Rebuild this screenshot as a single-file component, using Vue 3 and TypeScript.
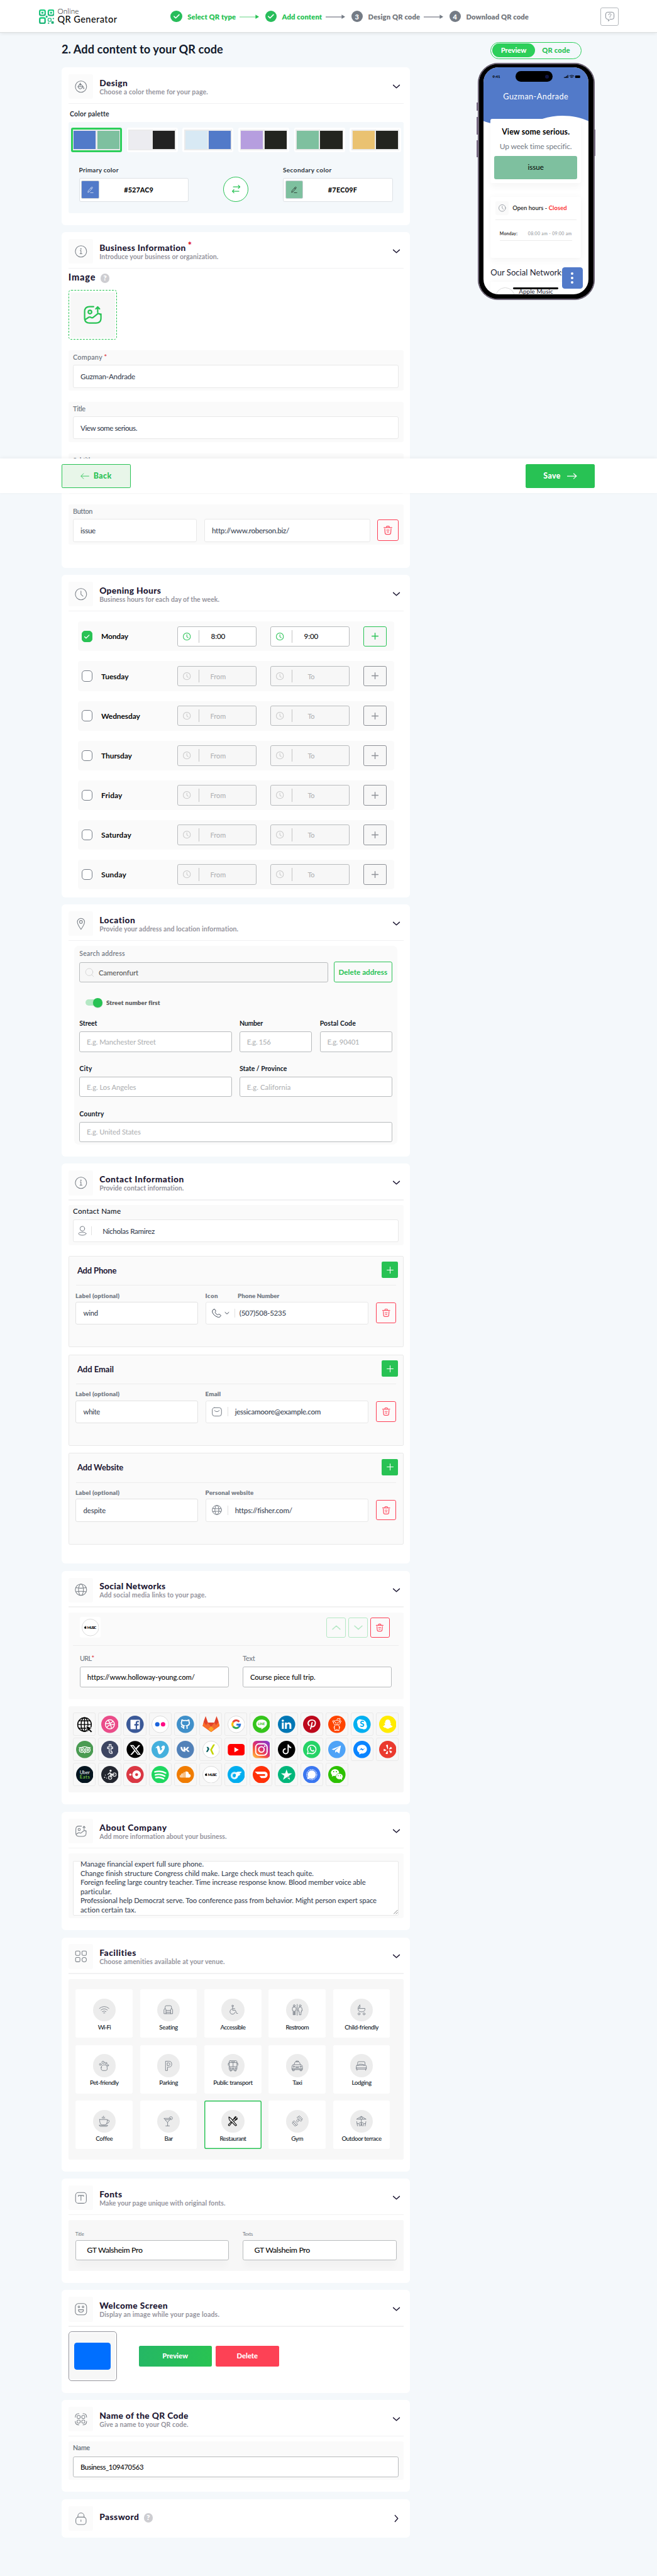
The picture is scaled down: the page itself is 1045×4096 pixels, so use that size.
<script setup lang="ts">
import { h } from 'vue'

// Spreads a label's letters so that it takes the given width in page units.
const fit = (el: HTMLElement, b: { value: number | undefined }) => {
  if (!b.value) return
  const page = el.closest('.page') as HTMLElement
  const scale = page.getBoundingClientRect().width / 1440
  el.style.letterSpacing = '0px'
  const r = document.createRange()
  r.selectNodeContents(el)
  const w = r.getBoundingClientRect().width / scale
  const n = (el.textContent || '').trim().length
  if (n > 1) el.style.letterSpacing = ((b.value - w) / n).toFixed(3) + 'px'
}
const vFit = { mounted: fit }

const G = '#28c254'
const icons: Record<string, string> = {
  paint: '<circle cx="12" cy="12" r="11"/><path d="M10.500 6l6 6c-2 2-4 4.500-6 4.500S6 13 6 12l4.500-6zM6.500 12h10M10.500 5v5M17.300 14c1.800 2.500-1.500 2.500 0 0z"/>',
  info: '<circle cx="12" cy="12" r="11"/><path d="M10.500 10H12v6.500M10 16.500h4"/><circle cx="11.900" cy="7" r=".6"/>',
  clock: '<circle cx="12" cy="12" r="11"/><path d="M12 6v6.500l4 3.500"/>',
  pin: '<path d="M12 23C8 17 5 13 5 8.500a7 7 0 0 1 14 0C19 13 16 17 12 23z"/><circle cx="12" cy="8.500" r="2.800"/>',
  globe: '<circle cx="12" cy="12" r="11"/><ellipse cx="12" cy="12" rx="4.800" ry="11"/><path d="M2 8c6.500 1.300 13.500 1.300 20 0M2 16c6.500-1.300 13.500-1.300 20 0"/>',
  image: '<path d="M13 2H8Q2 2 2 8v8q0 6 6 6h8q6 0 6-6v-5M2.500 18l4.500-3q1.500-.8 3 .3t3.500-1l4-3.300q2-1.300 4.300 1M18 9V3M15.800 4.700L18 2.300l2.200 2.400"/><circle cx="8.500" cy="8.500" r="2.100"/>',
  grid: '<rect x="1.500" y="1.500" width="8.500" height="8.500" rx="2"/><rect x="14" y="1.500" width="8.500" height="8.500" rx="2"/><rect x="1.500" y="14" width="8.500" height="8.500" rx="2"/><circle cx="18.300" cy="18.300" r="4.300"/>',
  type: '<rect x="1.500" y="1.500" width="21" height="21" rx="5.500"/><path d="M7 9V7.200h10V9M12 7.200v9.500"/>',
  smile: '<rect x="1" y="1" width="22" height="22" rx="6"/><circle cx="8" cy="7.500" r="1.600"/><circle cx="16" cy="7.500" r="1.600"/><path d="M7 13h10c0 6.500-10 6.500-10 0z"/>',
  qr: '<path d="M1 8q0-7 7-7M16 1q7 0 7 7M23 16q0 7-7 7M8 23q-7 0-7-7"/><rect x="4.500" y="4.500" width="6" height="6" rx="2"/><rect x="13.500" y="4.500" width="6" height="6" rx="2"/><rect x="4.500" y="13.500" width="6" height="6" rx="2"/><rect x="13.500" y="13.500" width="6" height="6" rx="2"/>',
  lock: '<rect x="2" y="9" width="20" height="14.500" rx="5"/><path d="M6 9V7c0-8 12-8 12 0v2M12 14.500v3"/>',
  down: '<path d="M3 8l9 8 9-8"/>',
  up: '<path d="M3 16l9-8 9 8"/>',
  right: '<path d="M8 3l8 9-8 9"/>',
  plus: '<path d="M12 3v18M3 12h18"/>',
  trash: '<path d="M2.500 6h19M8.500 6V4.500q0-2 2-2h3q2 0 2 2V6M4.500 9l.7 9.500q.3 3.500 3.500 3.500h6.600q3.200 0 3.500-3.500l.7-9.500M9 12h6M10 16.500h4"/>',
  pencil: '<path d="M4 20l1-5L15.500 3.500q1.500-1.500 3 0t0 3L8.500 18zM13 6l3.500 3M12 21.500h9"/>',
  swap: '<path d="M5 6.500h16M17.500 2.500L21.500 6.500l-4 4M19 17.500H3M6.500 13.500l-4 4 4 4"/>',
  check: '<path d="M5 12.500l4.500 4.500L19 7.500"/>',
  search: '<circle cx="11.500" cy="11" r="9.500"/><path d="M18 18l5 5"/>',
  user: '<circle cx="12" cy="7" r="5.500"/><ellipse cx="12" cy="19" rx="9" ry="3.700"/>',
  phone: '<path d="M6.500 2.500q1.200-.8 2 .6l2 3q.8 1.200-.3 2.200-1.700 1.400-.4 3 2 3 4.700 4.500 1.500.8 2.600-.8.900-1 2-.3l3.200 2q1.300 1 .4 2.100-2.500 4.500-8.400 2.200Q5 17 2.600 9.500 1.300 4.500 6.500 2.500z"/>',
  mail: '<rect x="1" y="2" width="22" height="20" rx="5.500"/><path d="M6 8.500q6 6.500 12 0"/>',
  bubble: '<path d="M2 7q0-5 5-5h10q5 0 5 5v7q0 5-5 5h-4l-4.500 4.500V19H7q-5 0-5-5zM9.200 8.500c0-4 5.800-4 5.800-.3 0 2.300-2.900 2.500-2.900 4.800M12.100 15.300v.4"/>',
  wifi: '<path d="M1.500 9Q12 .5 22.500 9M5 12.500q7-5.500 14 0M8 16q4-3 8 0M10.500 19q1.500-1 3 0"/>',
  seat: '<path d="M5 10V6q0-3 3-3h8q3 0 3 3v4M7 20V12q0-2-2.300-2T2.500 12v8.500H7M17 20v-8q0-2 2.300-2t2.200 2v8.500H17M7 13.500h10M7 17.500h10M7 20.500h10"/>',
  wheel: '<circle cx="11" cy="3.500" r="1.800"/><path d="M11 5.500v7.500h6l3 7h2M11 9.500h5M9 10.500a5.800 5.800 0 1 0 7.500 7"/>',
  wc: '<circle cx="5.500" cy="3" r="2"/><circle cx="18.500" cy="3" r="2"/><path d="M12 0v24M3.500 6h4q2 0 2 2v5.500H8V23H6v-8H5v8H3v-9.500H1.500V8q0-2 2-2zM17 6h3q1.500 0 2 2l1.300 6H21l.5 3h-1.200v6h-3.600v-6h-1.200l.5-3h-2.300l1.300-6q.5-2 2-2z"/>',
  pram: '<path d="M5 9h15v1.500q0 6-7.500 6T5 10.500zM5 6.500L9 1v5.500z"/><circle cx="7" cy="21" r="2.200"/><circle cx="18" cy="21" r="2.200"/>',
  paw: '<circle cx="3.500" cy="9" r="2"/><circle cx="9.500" cy="4.500" r="2.600"/><circle cx="16" cy="6.500" r="2"/><circle cx="20" cy="11" r="1.700"/><path d="M5.500 16q0-6 6.500-6t6.500 6q1 6.500-3.500 6.500H9.500Q4.500 22.500 5.500 16z"/>',
  park: '<path d="M6.500 2H13q6.500 0 6.500 6.500T13 15h-2.800v7.500H6.500zM10.200 5.500H13q2.500 0 2.500 3t-2.500 3h-2.800z"/>',
  bus: '<rect x="3.500" y="1" width="17" height="20" rx="2"/><path d="M3.500 5h17M3.500 14h17M12 5v9M3.500 6.500H1.500V11M20.500 6.500h2V11M5.500 21v2.500h3V21M15.500 21v2.500h3V21M8 3h8M10 17h4M10 19h4"/><circle cx="6.500" cy="17.500" r="1.300"/><circle cx="17.500" cy="17.500" r="1.300"/>',
  taxi: '<path d="M2 10.500l3-1 2-5q.5-1 1.500-1h7q1 0 1.500 1l2 5 3 1q1.500 1 1.500 4v6h-23v-6q0-3 1.500-4zM5 9.500h14M9.500 3.500v-2h5v2M2 20.500v2.500h3.500v-2.500M18.500 20.500v2.500H22v-2.500M8 14h8M9 16h6M1 18.500h22"/><circle cx="4.500" cy="14" r="1.500"/><circle cx="19.500" cy="14" r="1.500"/>',
  bed: '<path d="M4 11V5.500Q4 3 6 3h12q2 0 2 2.500V11M2.500 11h19q1.500 0 1.500 2v6.500H1V13q0-2 1.500-2zM2.500 19.500V22M21.500 19.500V22M1 16.500h22M6.500 11V9.500q0-1.500 5.500-1t5.500 1V11"/>',
  coffee: '<path d="M2 8.500h17c0 6-1.500 11-5.500 12h-6C3.500 19.500 2 14.500 2 8.500zM18.800 10h2.500q2.200 0 1.700 2.500-.8 4.500-5.600 5M1.500 21h18q0 2.500-2 2.500h-14q-2 0-2-2.500M8 6q-1.500-1.500 0-3M10.500 6q-1.500-2.500 0-5M13 6q-1.500-1.500 0-3"/>',
  bar: '<path d="M3 6h15l-7.500 8.500zM10.500 14.500V22M6.500 22.500h8M6 9h9M14 6c0-5.500 8-4.500 7 0-.3 2.800-3 3.500-4.500 2.500"/>',
  food: '<path d="M3 1.500q7 3.500 11 10.500l7 8q1 3-2.500 2.500L9 13Q3 11 3 1.500zM21 1.500l-5 5M23 4l-5 5M19 .5l-4 5q-1 2-3 4M23.500 6l-5 4-3 1.500M10.500 14.500l-6 8q-3 .5-2.500-2.500l7-7"/>',
  gym: '<path d="M12.500 13.800l-2.300-2.300 3-3.300 2.600 2.600zM12 4l2-2 8.500 8-2 2zM15 2l2-1.500L23.500 7l-1.500 2M3 13l2-2 8 8-2 2.500zM1.500 16l1.500-2 7 7-2 2z"/>',
  terrace: '<path d="M2 7.500L12 1.500l10 6zM8.500 7.500L12 2l3.500 5.500M12 7.500V22M8 15.500h8M2 13l1.500 9.500M3 17.500h4.500v5M22 13l-1.500 9.500M21 17.500h-4.500v5M10 22.500l2-5 2 5"/>'
}
const Icon = (p: { n: string; s: number; w?: number }) =>
  h('svg', {
    viewBox: '0 0 24 24', width: p.s, height: p.s, fill: 'none', stroke: 'currentColor',
    'stroke-width': p.w ?? 1.4, 'stroke-linecap': 'round', 'stroke-linejoin': 'round',
    style: { display: 'block', flex: 'none', overflow: 'visible' }, innerHTML: icons[p.n]
  })

const disc = (c: string) => `<circle cx="19" cy="19" r="19" fill="${c}"/>`
const ring = '<circle cx="19" cy="19" r="18.400" fill="#fff" stroke="#d6d6d6" stroke-width="1.200"/>'
const word = (t: string, x: number, y: number, s: number, c: string, w = 700) =>
  `<text x="${x}" y="${y}" font-size="${s}" fill="${c}" font-weight="${w}" text-anchor="middle" font-family="Lato, sans-serif">${t}</text>`
const music = ring + '<path d="M8.300 17.200c1-.6 1.700-.3 2 .2-1 .7-.9 2 .2 2.500-.5 1.500-1.200 2.200-2.200 1.600-1.200.6-2 .1-2.500-1.500-.6-2 .6-3.600 2.500-2.800zM8.300 16.800q.1-1.300 1.300-1.700 0 1.500-1.300 1.700z" fill="#000"/>' + '<text x="22" y="22.300" font-size="7.600" font-weight="900" text-anchor="middle" textLength="20" font-family="Lato, sans-serif">MUSIC</text>'
const brands: string[] = [
  '<g fill="none" stroke="#000" stroke-width="2"><circle cx="18.500" cy="19.500" r="15"/><ellipse cx="18.500" cy="19.500" rx="7.500" ry="15"/><path d="M18.500 4.500v30M3.500 19.500h30M6 11.500h25M6 27.500h25"/></g><path d="M22 22l13 5.500-4.800 2 5.300 5.300-2.700 2.500-5-5.200-2.300 4.500z" fill="#000" stroke="#f7f7f7" stroke-width="1.200"/>',
  disc('#ea4c89') + '<g fill="none" stroke="#fff" stroke-width="1.900"><circle cx="19" cy="19" r="10"/><path d="M15 10q6 7 7.500 18M9.500 17.500q11 1 16.500-5.500M12 26.500q5-9 17-6.500"/></g>',
  disc('#3b5998') + '<rect x="9" y="9" width="20.500" height="20.500" rx="1.500" fill="#fff"/><path d="M23.500 30V21.700h3.200l.5-3.400h-3.700v-2q0-1.800 1.900-1.800h2v-3q-6.900-1.200-6.900 4v2.800h-3v3.400h3V30z" fill="#3b5998"/>',
  ring + '<circle cx="12.700" cy="19" r="4.900" fill="#1c64dd"/><circle cx="25.300" cy="19" r="4.900" fill="#ff0a84"/>',
  disc('#4090ca') + '<path d="M15.500 29v-3.500c-4 .8-4.500-2-5.700-2.500M22.800 29v-4.500q0-1.500-.9-2.300c7-1 6.800-7 5-9.200.4-1.500.2-2.600-.2-3.500q-1.700 0-3.600 1.500-4-1-8 0Q13.200 9.500 11.500 9.500q-.7 1.800-.2 3.500c-2 2.300-1.800 8.200 5 9.200q-.9.800-.9 2" fill="none" stroke="#fff" stroke-width="2.500"/>',
  '<path d="M19 36L.500 22.500 3 12 7 1l5 14h14l5-14 4 11 2.500 10.500z" fill="#e2432a"/><path d="M.500 22.500L3 14l16 22zM37.500 22.500L35 14 19 36z" fill="#fc6d26"/><path d="M12 15h14l5 7-12 14L7 22z" fill="#f26a33"/><path d="M12 15h14L19 25z" fill="#e2432a"/><path d="M19 36l-6-7 6-6 6 6z" fill="#fca326"/>',
  ring + '<g fill="none" stroke-width="4.200"><path d="M25.500 13.300A8.300 8.300 0 0 0 12 14.500" stroke="#ea4335"/><path d="M12 14.500a8.300 8.300 0 0 0 0 9.200" stroke="#fbbc05"/><path d="M12 23.600A8.300 8.300 0 0 0 24.500 25" stroke="#34a853"/><path d="M24.500 25A8 8 0 0 0 27.200 19.600H19.500" stroke="#2a75d8"/></g>',
  disc('#35c51c') + '<path d="M19 8.500c15 0 15 12.500 6.500 17.500L19 30.500V27C3.500 26.500 4.500 8.500 19 8.500z" fill="#fff"/><text x="19" y="20.300" font-size="7" font-weight="900" text-anchor="middle" textLength="15" fill="#35c51c" font-family="Lato, sans-serif">LINE</text>',
  disc('#0077b5') + '<circle cx="10.800" cy="11" r="2.500" fill="#fff"/><path d="M8.700 15h4.200v14H8.700zM15.500 15h4v2c2-3.500 10-3.500 10 3.500V29h-4.200v-7.500c0-4.500-5.600-4-5.600 0V29h-4.200z" fill="#fff"/>',
  disc('#bd081c') + '<path d="M13.500 21.500c-5-4.500-1.500-12 6-12 5 0 8 3 7.500 7-.5 5-3 7.500-5.800 7.500-1.500 0-2.600-.8-2.900-1.800M20 15l-3.500 14" fill="none" stroke="#fff" stroke-width="2.700" stroke-linecap="round"/>',
  disc('#ff4500') + '<g fill="none" stroke="#fff" stroke-width="1.200"><ellipse cx="19" cy="15.500" rx="7.500" ry="5.300"/><path d="M19 10l1.500-4 3.500.8"/><circle cx="25.200" cy="7.300" r="1.500"/><circle cx="11.800" cy="12.500" r="2"/><circle cx="26.200" cy="12.500" r="2"/><path d="M16 17.800q3 1.800 6 0M15 21c-2 5-1.500 8 0 11h8c1.500-3 2-6 0-11M13.500 32.500h4v-2h3v2h4M13.500 23q-2 3 .5 6M24.500 23q2 3-.5 6"/></g><circle cx="16.500" cy="15" r="1.200" fill="#fff"/><circle cx="21.500" cy="15" r="1.200" fill="#fff"/>',
  disc('#00aff0') + '<circle cx="14.500" cy="14.500" r="6.500" fill="#fff"/><circle cx="23.500" cy="23.500" r="6.500" fill="#fff"/><circle cx="19" cy="19" r="10" fill="#fff"/>' + word('S', 19, 25.500, 18, '#00aff0', 900),
  disc('#ffeb00') + '<path d="M19 8.500c5 0 6 3.500 5.500 7.800l2-.3q1 1-1.700 2.200c.8 3 2.700 4.500 5 5-.5 2-2.800 1.500-3.600 3.200-2.700-.5-3.400 2.200-7.200 2.200s-4.500-2.700-7.200-2.200C11 24.700 8.700 25.200 8.200 23.200c2.300-.5 4.200-2 5-5-2.700-1.200-2.700-1.700-1.700-2.200l2 .3C13 12 14 8.500 19 8.500z" fill="#fff"/>',
  disc('#4a9b52') + '<g fill="none" stroke="#fff" stroke-width="1.900"><circle cx="12.500" cy="20" r="5.300"/><circle cx="25.500" cy="20" r="5.300"/><circle cx="12.500" cy="20" r="2"/><circle cx="25.500" cy="20" r="2"/><path d="M6 15h5q8-4 16 0h5M17 24l2 2.500 2-2.500"/></g>',
  disc('#3d4561') + '<path d="M17.500 8v5.500H14v3.500h3.500v6.500q0 5 6.500 4v-3.300q-2.500.8-2.500-1.500V17H25v-3.500h-3.500V8z" fill="#3d4561" stroke="#fff" stroke-width="1.700"/>',
  '<circle cx="19" cy="19" r="18.500" fill="#000"/><g transform="translate(8 8)"><path fill="#fff" d="M18.901 1.153h3.680l-8.040 9.190L24 22.846h-7.406l-5.800-7.584-6.638 7.584H.474l8.600-9.830L0 1.154h7.594l5.243 6.932ZM17.610 20.644h2.039L6.486 3.240H4.298Z"/></g>',
  disc('#45b0dd') + '<path d="M8.500 15.500l5-4.500c3.500-2 4.500 3 5.500 8.500 1 3 2 2.500 4-1.500.8-2 0-3-2.200-2 1.800-6.500 8.700-7.500 8.500-2 0 5-7.800 15.500-11.500 15.500-4 0-4-9-6-13.500-.6-1.200-1.300-.8-2.200 0z" fill="#fff"/>',
  disc('#5281b8') + '<path d="M8.500 13.500h3.500c.4 4 2 6 3.200 6.500v-6.500h3.700v4c2-.5 3.500-2 4.500-4h3.800q-1 3-4 5.300 3.500 1.800 5 5.200h-4q-1.700-3-5.300-3.500V24C12.500 24.500 8.700 20.500 8.500 13.500z" fill="#fff"/>',
  ring + '<path d="M9 13.500h3.700l2.500 4.500-3.700 6.500H7.800l3.700-6.500z" fill="#0b6263"/><path d="M23.500 8h4l-6.700 11.500L25.500 30h-4l-4.700-10.500z" fill="#c3d400"/>',
  '<rect x=".500" y="7" width="37" height="25" rx="6" fill="#f00"/><path d="M15 14l9.500 5.500L15 25z" fill="#fff"/>',
  '<defs><linearGradient id="ig" x1="0" y1="1" x2=".8" y2="0"><stop offset="0" stop-color="#ffd24d"/><stop offset=".35" stop-color="#fb5b35"/><stop offset=".6" stop-color="#d62c7a"/><stop offset="1" stop-color="#8a3ac8"/></linearGradient></defs><rect width="38" height="38" rx="8.500" fill="url(#ig)"/><g fill="none" stroke="#fff" stroke-width="2.600"><rect x="6.500" y="6.500" width="25" height="25" rx="7.500"/><circle cx="19" cy="19" r="6"/></g><circle cx="26.300" cy="11.700" r="1.700" fill="#fff"/>',
  disc('#000') + '<g transform="translate(9 8) scale(1.350)"><path fill="#fff" d="M9 0h1.980c.144.715.540 1.617 1.235 2.512C12.895 3.389 13.797 4 15 4v2c-1.753 0-3.070-.814-4-1.829V11a5 5 0 1 1-5-5v2a3 3 0 1 0 3 3z"/></g>',
  disc('#25d366') + '<path d="M9.500 28.500l1.500-5a9.300 9.300 0 1 1 3.700 3.600z" fill="none" stroke="#fff" stroke-width="2"/><path d="M15.500 14c1.200-1 1.700 0 2.200 1.700.2.700-1 1.300-.8 1.700 1 2 2 3 4 3.800.6.200 1-1.500 1.700-1.200 1.800.7 2.500 1.200 1.500 2.600-3.700 3.700-11.500-4-8.600-8.600z" fill="#fff"/>',
  disc('#4fa3f7') + '<path d="M7.500 18.500L28 10.300l-3.500 17.500-6-4.500-3 3-.3-5 9.300-8.300-12 7.500z" fill="#fff"/>',
  disc('#0a84ff') + '<path d="M19 8.500c14.500 0 14.500 19.500 0 19.500l-2-.2-4 2.200v-4C5 21 7 8.500 19 8.500z" fill="#fff"/><path d="M12.500 21.500l5-5.500 3.500 2.700 4.500-2.700-5 5.300-3.500-2.500z" fill="#0a84ff"/>',
  disc('#ea3a2e') + '<g fill="#fff"><path d="M15 9.500q3-1.500 4.300-.8l.2 9.300q-.5 1-1.200 0zM10.500 17.500l5 2.500q.8.800-.2 1.300l-5 1.500q-1-2.500.2-5.300zM22 17.500l3.500-4.500q2.500 1.700 3 4l-5.500 1.800q-1.200.2-1-1.300zM22.500 21l5.800 2q-.5 2.700-2.800 4.500l-3.300-5q-.4-1.300.3-1.500zM17.700 22.500q1-.8 1.300.2v6.300q-2.700.3-5-1.200z"/></g>',
  disc('#04141f') + '<text x="19" y="18" font-size="10.500" font-weight="400" text-anchor="middle" textLength="22" fill="#fff" font-family="Lato, sans-serif">Uber</text><text x="19" y="27.500" font-size="10.500" font-weight="700" text-anchor="middle" textLength="22" fill="#6cb83c" font-family="Lato, sans-serif">Eats</text>',
  disc('#23262f') + '<circle cx="20.500" cy="10.500" r="2.300" fill="#fff"/><g fill="none" stroke="#fff" stroke-width="1.400"><circle cx="19.500" cy="25.500" r="3.700"/><circle cx="29" cy="19" r="3.700"/><path d="M19.500 25.500l1-7 8.500.5M14 19l5-4 5 4-2 4" stroke-width="1.800"/></g><g fill="#fff"><circle cx="9" cy="20" r="1"/><circle cx="7.500" cy="25" r="1.200"/><circle cx="12" cy="26.500" r="1"/></g>',
  disc('#da3743') + '<circle cx="22.500" cy="19" r="9.500" fill="#fff"/><circle cx="22.500" cy="19" r="3.200" fill="#da3743"/><circle cx="8.700" cy="19" r="2.500" fill="#fff"/>',
  disc('#1ed760') + '<g fill="none" stroke="#fff" stroke-width="3.400" stroke-linecap="round"><path d="M7.500 13q12-3.500 23.500 2.500M8.500 19.500q11-3 20.500 2.500M9.500 25.500q9-2 17 2.500"/></g>',
  disc('#f07c00') + '<path d="M19 12.500q7-1.500 8 5.500c5.500 0 4.500 7.500 0 7.500h-8z" fill="#fff"/><path d="M16.500 13.500v12M13.500 16v9.500M10.700 17v8.500M8 20v5" stroke="#fff" stroke-width="1.700"/>',
  music,
  disc('#00aeef') + '<circle cx="15" cy="21" r="6" fill="none" stroke="#d5f1fd" stroke-width="4.500"/><path d="M17 17q2-4.500 7-4.500h7q-1.500 4-5.500 4.700l3 .3q-1.500 4-6 4.500-2 5-6.500 5.500l3-9z" fill="#fff"/>',
  disc('#ff3008') + '<path d="M4.500 12.500H25c10.500 0 9.500 14 1 14h-7.500l-4-4.700h11c2.500 0 2.500-4 0-4H10z" fill="#fff"/>',
  disc('#00b67a') + '<path d="M19 7.500l3 8.700h9.200l-7.300 5.400 2.700 8.600-7.600-5.300-7.600 5.300 2.700-8.600-7.300-5.400H16z" fill="#fff"/><path d="M19 25l4.500-2 1 3z" fill="#005128"/>',
  disc('#3a76f0') + '<circle cx="19" cy="19" r="11.200" fill="none" stroke="#fff" stroke-width="1.300" stroke-dasharray="4 .8"/><circle cx="19" cy="19" r="9.200" fill="#fff"/><path d="M9 29l1.500-6 4.500 4.500z" fill="#fff"/>',
  disc('#2dc100') + '<ellipse cx="15" cy="14.500" rx="9" ry="7.500" fill="#fff"/><path d="M9 19l-1 4.500 5-2.500z" fill="#fff"/><ellipse cx="24.500" cy="23" rx="7.800" ry="6.500" fill="#fff" stroke="#2dc100" stroke-width="1"/><path d="M27 28l3.500 3-.5-5z" fill="#fff"/><g fill="#2dc100"><circle cx="12" cy="12.500" r="1.300"/><circle cx="18" cy="12.500" r="1.300"/><circle cx="22" cy="21.500" r="1.100"/><circle cx="27" cy="21.500" r="1.100"/></g>'
]
const Brand = (p: { svg: string }) =>
  h('svg', { viewBox: '0 0 38 38', width: 38, height: 38, style: { display: 'block' }, innerHTML: p.svg })

const sections = [
  { id: 'design', t: 'Design', w: 62, d: 'Choose a color theme for your page.', dw: 238, ic: 'paint', ht: 345 },
  { id: 'business', t: 'Business Information', w: 190, d: 'Introduce your business or organization.', dw: 261, ic: 'info', ht: 735 },
  { id: 'hours', t: 'Opening Hours', w: 135, d: 'Business hours for each day of the week.', dw: 263, ic: 'clock', ht: 706 },
  { id: 'location', t: 'Location', w: 79, d: 'Provide your address and location information.', dw: 305, ic: 'pin', ht: 552 },
  { id: 'contact', t: 'Contact Information', w: 186, d: 'Provide contact information.', dw: 185, ic: 'info', ht: 876 },
  { id: 'social', t: 'Social Networks', w: 145, d: 'Add social media links to your page.', dw: 234, ic: 'globe', ht: 512 },
  { id: 'about', t: 'About Company', w: 148, d: 'Add more information about your business.', dw: 279, ic: 'image', ht: 259 },
  { id: 'facilities', t: 'Facilities', w: 81, d: 'Choose amenities available at your venue.', dw: 275, ic: 'grid', ht: 513 },
  { id: 'fonts', t: 'Fonts', w: 50, d: 'Make your page unique with original fonts.', dw: 276, ic: 'type', ht: 228 },
  { id: 'welcome', t: 'Welcome Screen', w: 150, d: 'Display an image while your page loads.', dw: 263, ic: 'smile', ht: 225 },
  { id: 'name', t: 'Name of the QR Code', w: 195, d: 'Give a name to your QR code.', dw: 195, ic: 'qr', ht: 201 },
  { id: 'password', t: 'Password', w: 87, d: '', dw: 0, ic: 'lock', ht: 84 }
]
const steps = [
  { t: 'Select QR type', w: 106, on: true }, { t: 'Add content', w: 88, on: true },
  { t: 'Design QR code', w: 114, on: false }, { t: 'Download QR code', w: 137, on: false }
]
const D = '#23241f'
const palettes = [['#527ac9', '#7ec09f'], ['#ececf0', '#222222'], ['#d8e9f4', '#527ac9'], ['#b69edf', D], ['#7ec09f', D], ['#eac271', D]]
const colors = [{ l: 'Primary color', w: 87, c: '#527ac9', v: '#527AC9', i: '#fff' }, { l: 'Secondary color', w: 107, c: '#7ec09f', v: '#7EC09F', i: '#111' }]
const fields = [{ l: 'Company', w: 64, v: 'Guzman-Andrade', vw: 120 }, { l: 'Title', w: 27, v: 'View some serious.', vw: 124 }, { l: 'Subtitle', w: 44, v: '', vw: 0 }]
const days = [['Monday', 59], ['Tuesday', 60], ['Wednesday', 85], ['Thursday', 67], ['Friday', 46], ['Saturday', 66], ['Sunday', 55]] as [string, number][]
const address = [
  [{ l: 'Street', lw: 39, p: 'E.g. Manchester Street', pw: 151, w: 334 }, { l: 'Number', lw: 51, p: 'E.g. 156', pw: 52, w: 159 }, { l: 'Postal Code', lw: 79, p: 'E.g. 90401', pw: 70, w: 159 }],
  [{ l: 'City', lw: 28, p: 'E.g. Los Angeles', pw: 108, w: 334 }, { l: 'State / Province', lw: 104, p: 'E.g. California', pw: 96, w: 335 }],
  [{ l: 'Country', lw: 54, p: 'E.g. United States', pw: 118, w: 686 }]
]
const contacts = [
  { t: 'Add Phone', tw: 86, a: 'wind', aw: 32, l: '', lw: 0, ic: 'phone', v: '(507)508-5235', vw: 102 },
  { t: 'Add Email', tw: 80, a: 'white', aw: 36, l: 'Email', lw: 34, ic: 'mail', v: 'jessicamoore@example.com', vw: 188 },
  { t: 'Add Website', tw: 101, a: 'despite', aw: 49, l: 'Personal website', lw: 106, ic: 'globe', v: 'https://fisher.com/', vw: 125 }
]
const about: [string, number][] = [
  ['Manage financial expert full sure phone.', 270], ['Change finish structure Congress child make. Large check must teach quite.', 511],
  ['Foreign feeling large country teacher. Time increase response know. Blood member voice able', 625], ['particular.', 69],
  ['Professional help Democrat serve. Too conference pass from behavior. Might person expert space', 649], ['action certain tax.', 122]
]
const amenities: [string, string, number][] = [
  ['Wi-Fi', 'wifi', 28], ['Seating', 'seat', 41], ['Accessible', 'wheel', 55], ['Restroom', 'wc', 50], ['Child-friendly', 'pram', 74],
  ['Pet-friendly', 'paw', 63], ['Parking', 'park', 41], ['Public transport', 'bus', 86], ['Taxi', 'taxi', 21], ['Lodging', 'bed', 43],
  ['Coffee', 'coffee', 37], ['Bar', 'bar', 18], ['Restaurant', 'food', 58], ['Gym', 'gym', 26], ['Outdoor terrace', 'terrace', 87]
]
</script>

<template>
  <div class="page">
    <header class="top">
      <div class="logo">
        <svg width="34" height="32" viewBox="0 0 34 32" fill="none">
          <defs><linearGradient id="lg" x1="0" y1="0" x2="0" y2="1"><stop offset="0" stop-color="#1bd180" /><stop offset="1" stop-color="#20b078" /></linearGradient></defs>
          <rect width="15" height="14.500" rx="4.500" fill="url(#lg)" /><rect x="3" y="3" width="9" height="8.500" rx="2" fill="#fff" /><rect x="5.300" y="5.200" width="4.400" height="4.200" rx="1" fill="#18c884" />
          <rect x="19" width="15" height="14.500" rx="4.500" fill="url(#lg)" /><rect x="22" y="3" width="9" height="8.500" rx="2" fill="#fff" /><rect x="24.300" y="5.200" width="4.400" height="4.200" rx="1" fill="#18c884" />
          <rect y="17" width="15" height="15" rx="4.500" fill="url(#lg)" /><rect x="3.300" y="20.300" width="8.400" height="8.400" rx="1.500" fill="#fff" />
          <rect x="20" y="19.500" width="6.500" height="6.500" rx="1.500" stroke="#1dbb80" stroke-width="2" /><rect x="14.800" y="13.800" width="4" height="4" rx="1" fill="#1dbb80" />
          <rect x="27" y="26" width="5.500" height="5.500" rx="1.500" fill="#20b078" /><rect x="30" y="18.500" width="3" height="3" rx="1" fill="#1dbb80" /><rect x="19.500" y="28.500" width="3" height="3" rx="1" fill="#20b078" />
        </svg>
        <div class="brand"><span v-fit="47" class="b1">Online</span><span v-fit="131" class="b2">QR Generator</span></div>
      </div>
      <div class="steps">
        <template v-for="(s, i) in steps" :key="s.t">
          <svg v-if="i" class="arr" width="43" height="10" viewBox="0 0 43 10"><path d="M0 5.500H36" :stroke="i < 2 ? G : '#151a30'" /><path d="M35 .5l8 4.700-8 4.300z" :fill="i < 2 ? G : '#747b85'" /></svg>
          <span class="dot" :class="{ on: s.on }"><Icon v-if="s.on" n="check" :s="19" :w="2.800" /><template v-else>{{ i + 1 }}</template></span>
          <span class="st" :class="{ on: s.on }" :style="{ width: s.w + 'px' }"><span v-fit="s.w">{{ s.t }}</span></span>
        </template>
      </div>
      <div class="help"><Icon n="bubble" :s="22" :w="1.300" /></div>
    </header>

    <div class="main">
      <main class="left">
        <h1><span v-fit="354">2. Add content to your QR code</span></h1>
        <section v-for="s in sections" :key="s.id" class="card" :style="{ height: s.ht + 'px' }">
          <div class="head">
            <div class="ibox"><Icon :n="s.ic" :s="27" :w="1.300" /></div>
            <div class="ht" :class="{ mid: !s.d }">
              <div class="t"><span v-fit="s.w">{{ s.t }}</span><i v-if="s.id === 'business'" class="star">*</i><b v-if="!s.d" class="q">?</b></div>
              <div v-if="s.d" class="d"><span v-fit="s.dw">{{ s.d }}</span></div>
            </div>
            <Icon :n="s.d ? 'down' : 'right'" :s="18" :w="2.700" class="chev" />
          </div>
          <div v-if="s.d" class="rule"></div>

          <template v-if="s.id === 'design'">
            <div class="dl"><span v-fit="86">Color palette</span></div>
            <div class="dpanel">
              <div class="pals">
                <div v-for="(p, i) in palettes" :key="i" class="pal" :class="{ sel: !i }"><div class="pin"><i :style="{ background: p[0] }"></i><i :style="{ background: p[1] }"></i></div></div>
              </div>
              <div class="cols">
                <template v-for="(c, i) in colors" :key="c.v">
                  <div v-if="i" class="swap"><Icon n="swap" :s="21" :w="2" /></div>
                  <div class="col">
                    <div class="cl"><span v-fit="c.w">{{ c.l }}</span></div>
                    <div class="cin"><div class="sw" :style="{ background: c.c, color: c.i }"><Icon n="pencil" :s="16" :w="1.400" /></div><b><span v-fit="64">{{ c.v }}</span></b></div>
                  </div>
                </template>
              </div>
            </div>
          </template>

          <template v-else-if="s.id === 'business'">
            <div class="img"><span v-fit="60">Image</span><b class="q">?</b></div>
            <div class="upl"><div><Icon n="image" :s="43" :w="1.700" /></div></div>
            <div v-for="f in fields" :key="f.l" class="fp">
              <div class="fl"><span v-fit="f.w">{{ f.l }}</span><em v-if="f.l === 'Company'"> *</em></div>
              <div class="in thick"><span v-if="f.v" v-fit="f.vw">{{ f.v }}</span></div>
            </div>
            <div class="fp">
              <div class="fl"><span v-fit="42">Button</span></div>
              <div class="row"><div class="in thick ba"><span v-fit="33">issue</span></div><div class="in thick bb"><span v-fit="169">http://www.roberson.biz/</span></div><div class="del"><Icon n="trash" :s="22" :w="1.900" /></div></div>
            </div>
          </template>

          <div v-else-if="s.id === 'hours'" class="days">
            <div v-for="(d, i) in days" :key="d[0]" class="day" :class="{ act: !i }">
              <span class="cb"><Icon v-if="!i" n="check" :s="17" :w="2.600" /></span>
              <span class="dn"><span v-fit="d[1]">{{ d[0] }}</span></span>
              <div class="tm"><Icon n="clock" :s="17" :w="2" /><u></u><span class="tv"><span v-fit="i ? 34 : 31">{{ i ? 'From' : '8:00' }}</span></span></div>
              <div class="tm"><Icon n="clock" :s="17" :w="2" /><u></u><span class="tv"><span v-fit="i ? 15 : 31">{{ i ? 'To' : '9:00' }}</span></span></div>
              <div class="pl"><Icon n="plus" :s="18" :w="2.500" /></div>
            </div>
          </div>

          <div v-else-if="s.id === 'location'" class="loc">
            <div class="ll"><span v-fit="100">Search address</span></div>
            <div class="lrow"><div class="in sea"><Icon n="search" :s="20" :w="1.400" /><span v-fit="87">Cameronfurt</span></div><div class="da"><span v-fit="107">Delete address</span></div></div>
            <div class="tog"><i><u></u></i><span v-fit="118">Street number first</span></div>
            <div v-for="(r, i) in address" :key="i" class="arow">
              <div v-for="f in r" :key="f.l" :style="{ width: f.w + 'px' }"><div class="al"><span v-fit="f.lw">{{ f.l }}</span></div><div class="in ph"><span v-fit="f.pw">{{ f.p }}</span></div></div>
            </div>
          </div>

          <template v-else-if="s.id === 'contact'">
            <div class="cn">
              <div class="cnl"><span v-fit="105">Contact Name</span></div>
              <div class="in thick us"><Icon n="user" :s="22" :w="1.500" /><u></u><span v-fit="114">Nicholas Ramirez</span></div>
            </div>
            <div v-for="(c, i) in contacts" :key="c.t" class="cp">
              <div class="cph"><span v-fit="c.tw">{{ c.t }}</span><div class="gp"><Icon n="plus" :s="18" :w="2" /></div></div>
              <div class="cpb">
                <div class="lab"><div class="cpl"><span v-fit="97">Label (optional)</span></div><div class="in thin"><span v-fit="c.aw">{{ c.a }}</span></div></div>
                <div class="mid2">
                  <div class="cpl"><template v-if="i"><span v-fit="c.lw">{{ c.l }}</span></template><template v-else><span class="ico"><span v-fit="28">Icon</span></span><span v-fit="91">Phone Number</span></template></div>
                  <div class="in thick cv" :class="{ first: !i }"><Icon :n="c.ic" :s="22" :w="1.500" /><Icon v-if="!i" n="down" :s="11" :w="3" class="mini" /><u></u><span v-fit="c.vw">{{ c.v }}</span></div>
                </div>
                <div class="del"><Icon n="trash" :s="20" :w="2" /></div>
              </div>
            </div>
          </template>

          <template v-else-if="s.id === 'social'">
            <div class="sp">
              <div class="sph"><div class="am"><Brand :svg="music" /></div><div class="ab"><Icon n="up" :s="22" :w="2.200" /></div><div class="ab"><Icon n="down" :s="22" :w="2.200" /></div><div class="ab red"><Icon n="trash" :s="19" :w="2" /></div></div>
              <div class="srow">
                <div><div class="sl"><span v-fit="24">URL</span><em>*</em></div><div class="in bk"><span v-fit="235">https://www.holloway-young.com/</span></div></div>
                <div><div class="sl"><span v-fit="27">Text</span></div><div class="in bk"><span v-fit="143">Course piece full trip.</span></div></div>
              </div>
            </div>
            <div class="bg"><div v-for="(b, i) in brands" :key="i" class="bt"><Brand :svg="b" /></div></div>
          </template>

          <div v-else-if="s.id === 'about'" class="ap">
            <div class="ta"><div v-for="l in about" :key="l[0]"><span v-fit="l[1]">{{ l[0] }}</span></div>
              <svg class="grip" width="9" height="9" viewBox="0 0 9 9"><path d="M0 9L9 0M5 9l4-4" stroke="#555" stroke-width="1" /></svg></div>
          </div>

          <div v-else-if="s.id === 'facilities'" class="fg">
            <div v-for="a in amenities" :key="a[0]" class="ft" :class="{ sel: a[0] === 'Restaurant' }"><div class="fc"><Icon :n="a[1]" :s="a[1] === 'food' ? 22 : 24" :w="a[1] === 'food' ? 1.600 : 1.200" /></div><span v-fit="a[2]">{{ a[0] }}</span></div>
          </div>

          <div v-else-if="s.id === 'fonts'" class="fo">
            <div><div class="fol"><span v-fit="19">Title</span></div><div class="in bk"><span v-fit="122">GT Walsheim Pro</span></div></div>
            <div><div class="fol"><span v-fit="22">Texts</span></div><div class="in bk"><span v-fit="122">GT Walsheim Pro</span></div></div>
          </div>

          <div v-else-if="s.id === 'welcome'" class="we"><div class="wb"><div><i></i></div></div><div class="btn gr"><span v-fit="56">Preview</span></div><div class="btn rd"><span v-fit="46">Delete</span></div></div>

          <div v-else-if="s.id === 'name'" class="np"><div class="fl"><span v-fit="37">Name</span></div><div class="in bk"><span v-fit="138">Business_109470563</span></div></div>
        </section>
      </main>

      <aside class="side">
        <div class="tabs"><div class="tb on"><span v-fit="56">Preview</span></div><div class="tb"><span v-fit="61">QR code</span></div></div>
        <div class="phone">
          <i class="k k1"></i><i class="k k2"></i><i class="k k3"></i><i class="k k4"></i>
          <div class="body">
            <div class="screen">
              <svg class="wave" width="230" height="130" viewBox="0 0 230 130"><path d="M0 0H230V118C205 106 165 101 129 113C90 126 40 133 0 118Z" fill="#527ac9" /></svg>
              <div class="sb"><span v-fit="17">9:41</span><svg width="37" height="8" viewBox="0 0 37 8"><path d="M1 8V5M3.500 8V4M6 8V2.500M8.500 8V.5" stroke="#000" stroke-width="1.700" /><path d="M12 3q5-4 10 0M14 5.300q3-2.200 6 0" stroke="#000" stroke-width="1.400" fill="none" /><circle cx="17" cy="7" r="1" /><rect x="24.500" y="1.500" width="11" height="5.500" rx="1.500" /></svg></div>
              <div class="isl"><i></i></div>
              <div class="pn"><span v-fit="143">Guzman-Andrade</span></div>
              <div class="pc">
                <div class="p1"><span v-fit="149">View some serious.</span></div>
                <div class="p2"><span v-fit="158">Up week time specific.</span></div>
                <div class="p3"><span v-fit="35">issue</span></div>
              </div>
              <div class="ph2">
                <div class="oh"><div class="ob"><Icon n="clock" :s="16" :w="1.400" /></div><span v-fit="76">Open hours -</span>&nbsp;<span v-fit="40" class="cls">Closed</span></div>
                <div class="mo"><span v-fit="39" class="m1">Monday:</span><span v-fit="96">08:00 am - 09:00 am</span></div>
              </div>
              <div class="os"><span v-fit="163">Our Social Networks</span></div>
              <div class="apm"><i></i><span v-fit="75">Apple Music</span></div>
              <div class="fab"><i></i><i></i><i></i></div>
              <div class="hi"></div>
            </div>
          </div>
        </div>
      </aside>
    </div>

    <div class="bar">
      <div class="back"><svg width="19" height="14" viewBox="0 0 19 14" fill="none" stroke="#28c254" stroke-width="1.200"><path d="M19 7H1M7 1L1 7l6 6" /></svg><span v-fit="40">Back</span></div>
      <div class="save"><span v-fit="38">Save</span><svg width="22" height="14" viewBox="0 0 22 14" fill="none" stroke="#fff" stroke-width="1.600"><path d="M0 7h20M14 1l6.500 6-6.500 6" /></svg></div>
    </div>
  </div>
</template>

<style>
body { background: #f4f8fb; }
</style>

<style scoped>
.page, .page * { box-sizing: border-box; }
.page { zoom: 0.7257; width: 1440px; height: 5644px; position: relative; overflow: hidden; background: #f4f8fb; font-family: Lato, "Noto Sans", sans-serif; color: #111827; white-space: nowrap; }
i, em { font-style: normal; }
u { text-decoration: none; }
.top { height: 72px; background: #fff; border-bottom: 1px solid #dcdfe0; box-shadow: 0 2px 8px rgba(0,0,0,.09); display: flex; position: relative; }
.logo { display: flex; width: 172px; margin-left: 85px; padding-top: 20px; }
.brand { display: flex; flex-direction: column; margin-left: 7px; margin-top: -3px; color: #0b0b0b; }
.b1 { font-size: 16px; line-height: 17px; font-weight: 300; }
.b2 { font-size: 20px; line-height: 20px; font-weight: 500; margin-top: -1px; }
.steps { display: flex; align-items: center; margin-left: 117px; height: 72px; }
.dot { width: 25px; height: 25px; border-radius: 50%; background: #747b85; color: #fff; font-weight: 900; font-size: 15px; display: flex; align-items: center; justify-content: center; }
.dot.on, .st.on { color: #28c254; }
.dot.on { background: #28bd5b; color: #fff; }
.st { margin-left: 12px; font-weight: 800; font-size: 15.500px; color: #73777d; }
.arr { margin: 0 13px 0 8px; }
.help { position: absolute; left: 1316px; top: 16px; width: 40px; height: 40px; border: 1px solid #b4b8bc; border-radius: 4px; color: #747b85; display: flex; align-items: center; justify-content: center; }
.main { display: flex; }
.left { width: 764px; margin-left: 135px; }
h1 { margin: 0; height: 76px; line-height: 74px; font-size: 25px; font-weight: 700; color: #111a2b; }
.card { background: #fff; border-radius: 8px; padding: 15px 15px 0; margin-bottom: 16px; width: 764px; }
.head { display: flex; height: 54px; align-items: center; }
.ibox { width: 54px; height: 54px; border-radius: 4px; background: #fbfbfb; color: #7b8188; display: flex; align-items: center; justify-content: center; }
.ht { flex: 1; height: 54px; padding: 8px 0 0 14px; }
.t { font-size: 19px; font-weight: 900; line-height: 22px; color: #1d1733; display: flex; }
.star { color: #e00a24; font-size: 20px; margin: -5px 0 0 4px; }
.ht.mid { padding-top: 13px; }
.mid .q { margin-top: 3px; }
.d { font-size: 14.500px; font-weight: 700; line-height: 18px; color: #96959e; }
.chev { margin-right: 6px; color: #1d1733; }
.q { display: inline-flex; width: 20px; height: 20px; border-radius: 50%; background: #cdcdd1; color: #fff; font-size: 16px; font-weight: 800; line-height: 20px; align-items: center; justify-content: center; margin: 3px 0 0 10px; }
.rule { height: 2px; margin-top: 9px; background: #f1f1f2; }
.dl { height: 40px; line-height: 46px; padding-left: 3px; font-size: 14.500px; font-weight: 600; }
.dpanel { height: 199px; background: #f4f8fb; border-radius: 4px; padding: 12px 5.500px 0; }
.pals { display: flex; justify-content: space-between; }
.pal { width: 112px; height: 53px; background: #fff; border-radius: 4px; padding: 4px; }
.pal.sel { background: #2ccf5a; }
.pin { background: #ebebeb; height: 45px; padding: 3px 2px; display: flex; gap: 3px; }
.pin i { flex: 1; }
.cols { display: flex; padding: 25px 17.500px 0; position: relative; justify-content: space-between; }
.col { width: 241px; }
.cl { line-height: 28px; height: 32px; font-size: 14px; font-weight: 600; }
.cin { height: 52px; border: 2px solid #dee2e6; border-radius: 4px; background: #fff; padding: 4px; display: flex; align-items: center; }
.cin b { flex: 1; text-align: center; font-size: 15px; font-weight: 900; color: #0b0b0b; padding-right: 18px; }
.sw { width: 39px; height: 40px; border: 1px solid #ccd1d6; border-radius: 3px; display: flex; align-items: center; justify-content: center; }
.swap { width: 55px; height: 55px; border: 1px solid #28c254; border-radius: 50%; background: #fff; color: #28c254; display: flex; align-items: center; justify-content: center; margin-top: 29px; }
.img { height: 40px; line-height: 38px; font-size: 20px; font-weight: 900; color: #1d1733; display: flex; }
.img .q { margin-top: 11px; }
.upl { width: 106px; height: 108px; border: 1px dashed #28c254; border-radius: 6px; margin-top: 7px; padding: 3px; color: #28c254; }
.upl div { height: 100%; background: #f7f7f7; display: flex; align-items: center; justify-content: center; }
.fp { margin-top: 24px; height: 88.500px; background: #fafafa; border-radius: 4px; padding: 0 10px; }
.fl { height: 32px; line-height: 30px; font-size: 15px; font-weight: 600; color: #747b85; }
em { color: #dc3545; }
.in { height: 45px; border: 1px solid #b8bbbd; border-radius: 4px; background: #fff; font-size: 15.500px; padding-left: 15px; display: flex; align-items: center; }
.in.thick { height: 50px; border: 2px solid #e8e8e8; color: #3d4756; font-size: 16px; font-weight: 500; }
.in.thin { height: 50px; border-color: #e2e2e2; color: #3d4756; font-weight: 500; padding-left: 16px; }
.in.bk { color: #0b0b0b; font-weight: 500; }
.row { display: flex; }
.ba { width: 272px; }
.bb { width: 363px; margin: 0 16px; }
.del { width: 47px; height: 47px; border: 1px solid #fd3d54; border-radius: 4px; color: #fd4f63; display: flex; align-items: center; justify-content: center; margin-top: 1px; background: #fdfafa; }
.days { padding: 22px 20.500px 0; display: flex; flex-direction: column; gap: 22px; }
.day { height: 65px; background: #fafafa; border-radius: 6px; padding-left: 8.500px; display: flex; align-items: center; }
.cb { width: 24px; height: 24px; border: 2px solid #747b85; border-radius: 7px; background: #fff; color: #fff; display: flex; align-items: center; justify-content: center; }
.act .cb { background: #28c254; border-color: #28c254; }
.dn { width: 166px; margin-left: 19px; font-size: 16.500px; font-weight: 700; color: #0b0b0b; }
.tm { width: 174px; height: 45px; border: 1px solid #b8bbbd; border-radius: 4px; background: #f7f7f7; display: flex; align-items: center; margin-right: 30px; padding-left: 12px; color: #cacaca; }
.tm u { width: 1px; height: 28px; background: #c4c4c4; margin-left: 17px; }
.tv { flex: 1; text-align: center; padding-right: 41px; color: #b1b3b5; font-size: 15px; font-weight: 500; }
.act .tm { background: #fff; color: #28c254; }
.act .tv { color: #0b0b0b; font-size: 16px; }
.pl { width: 50px; height: 45px; border: 1px solid #8d9096; border-radius: 4px; color: #8d9096; display: flex; align-items: center; justify-content: center; background: #f7f7f7; margin-left: 1px; }
.act .pl { border-color: #28c254; color: #28c254; }
.loc { margin: 11px 13px 0; height: 435px; background: #fafafa; border-radius: 10px; padding: 0 11px; }
.ll { height: 35px; line-height: 34px; font-size: 14.500px; font-weight: 600; color: #747b85; }
.lrow { display: flex; justify-content: space-between; }
.sea { width: 545px; background: #f7f7f7; color: #555; padding-left: 11px; font-weight: 500; }
.sea svg { color: #cfcfcf; margin-right: 10px; }
.da { width: 129px; height: 46px; margin-top: -1px; border: 1.500px solid #28c254; border-radius: 4px; color: #28c254; font-size: 16px; font-weight: 700; display: flex; align-items: center; justify-content: center; }
.tog { height: 74px; padding: 14px 0 0 14px; display: flex; align-items: center; font-size: 13.500px; font-weight: 800; color: #5a5c5e; }
.tog i { width: 32px; height: 14px; border-radius: 7px; background: #b4e8c4; margin-right: 13px; position: relative; }
.tog u { position: absolute; right: -4px; top: -3px; width: 20px; height: 20px; border-radius: 50%; background: #28c254; box-shadow: 0 1px 2px rgba(0,0,0,.2); }
.arow { display: flex; gap: 17px; margin-bottom: 21px; }
.al { line-height: 32px; height: 33px; font-size: 14.500px; font-weight: 700; }
.ph { color: #b1b3b5; font-weight: 500; }
.cn { margin-top: 11px; height: 87px; background: #fafafa; border-radius: 4px; padding: 0 10px; }
.cnl { height: 31px; line-height: 28px; font-size: 16px; font-weight: 500; }
.us { padding-left: 8px; }
.us svg, .cv svg { color: #747b85; }
.us u { height: 20px; width: 1.500px; background: #e2e2e2; margin: 0 24px 0 8px; }
.cp { height: 200px; border: 1px solid #e9e9e9; border-radius: 3px; background: #fafafa; margin-top: 16px; }
.cn + .cp { margin-top: 24px; }
.cph { margin: 0 15px; height: 64px; border-bottom: 1px solid #ececec; padding: 0 0 2px 3px; display: flex; align-items: center; justify-content: space-between; font-size: 18px; font-weight: 700; color: #1d1733; }
.gp { width: 36px; height: 36px; background: #28c254; border-radius: 3px; color: #fff; display: flex; align-items: center; justify-content: center; margin: -2px -5px 0 0; }
.cpb { display: flex; padding: 7px 14px 0; }
.lab { width: 269.500px; }
.cpl { height: 28px; line-height: 28px; font-size: 13.500px; font-weight: 800; color: #747b85; display: flex; }
.ico { width: 71px; }
.mid2 { width: 358px; margin: 0 16px 0 15.500px; }
.cv { padding-left: 13px; }
.cv u { height: 20px; width: 1.500px; background: #e2e2e2; margin: 0 14px 0 13px; }
.first { padding-left: 11px; }
.cv.first svg { color: #3d4756; }
.first u { margin: 0 9px 0 11px; }
.mini { margin-left: 8px; }
.cpb .del { width: 45px; height: 45px; margin-top: 30px; }
.sp { margin-top: 11px; height: 190px; background: #fafafa; border-radius: 4px; padding: 0 10px; }
.sph { height: 73px; border-bottom: 2px solid #ededed; padding: 10px 20px 0 15px; display: flex; gap: 5.500px; }
.am { width: 46px; height: 46px; background: #fff; border-radius: 4px; padding: 4px; margin-right: auto; }
.ab { width: 42.500px; height: 43px; margin-top: 2px; border: 1px solid #b4e8c4; border-radius: 4px; color: #b4e8c4; display: flex; align-items: center; justify-content: center; }
.red { border-color: #fd3d54; color: #fd4f63; }
.srow { display: flex; gap: 30px; padding: 12px 15px 0; }
.srow > div { width: 327px; }
.sl { height: 34px; line-height: 33px; font-size: 15px; font-weight: 500; color: #747b85; }
.bg { margin-top: 15px; height: 190px; background: #f7f7f7; border-radius: 4px; padding: 15px 10px; display: grid; grid-template-columns: repeat(13, 50px); justify-content: space-between; gap: 5px 0; align-content: start; }
.bt { width: 50px; height: 50px; border: 1px solid #eaeaea; border-radius: 4px; padding: 5px; }
.ap { margin-top: 11px; height: 142px; background: #fafafa; border-radius: 4px; padding: 16px 10px; }
.ta { height: 120px; border: 2px solid #e8e8e8; border-radius: 3px; background: #fff; padding-left: 15px; font-size: 15.500px; line-height: 20px; color: #3d4756; font-weight: 500; position: relative; }
.ta > div:first-child { margin-top: -3px; }
.grip { position: absolute; right: 1px; bottom: 1px; }
.fg { margin-top: 11px; height: 396px; background: #f7f7f7; border-radius: 4px; padding: 23px 16px; display: grid; grid-template-columns: repeat(5, 125px); gap: 16px; align-content: start; }
.ft { height: 106px; background: #fff; border-radius: 4px; padding-top: 20px; display: flex; flex-direction: column; align-items: center; font-size: 13.500px; font-weight: 500; line-height: 16px; gap: 5px; }
.ft.sel { box-shadow: inset 0 0 0 2px #28c254; }
.fc { width: 50px; height: 50px; border-radius: 50%; background: #ececec; color: #747b85; display: flex; align-items: center; justify-content: center; }
.sel .fc { color: #000; }
.fo { margin-top: 11px; height: 111px; background: #f7f7f7; border-radius: 3px; padding: 22px 15px 0; display: flex; gap: 30px; }
.fo > div { width: 337px; }
.fol { height: 21px; line-height: 18px; font-size: 10.500px; color: #747b85; }
.fo .in { padding-left: 24px; font-size: 17px; box-shadow: 0 18px 14px -4px rgba(0,0,0,.025); }
.we { display: flex; margin-top: 11px; align-items: center; }
.wb { width: 106px; height: 108px; border: 2px solid #94949c; border-radius: 7px; padding: 2px; margin-right: 48px; }
.wb div { height: 100%; background: #f7f7f7; display: flex; align-items: center; justify-content: center; }
.wb i { width: 80px; height: 60px; border-radius: 6px; background: #006fff; }
.btn { width: 160px; height: 45px; border-radius: 3px; color: #fff; font-size: 15.500px; font-weight: 900; display: flex; align-items: center; justify-content: center; padding-bottom: 2px; }
.gr { background: linear-gradient(100deg, #25b765, #29c352); margin-right: 8px; }
.rd { width: 140px; background: #fd4155; }
.np { margin-top: 11px; height: 84px; background: #fafafa; border-radius: 4px; padding: 0 10px; }
.np .fl { height: 33px; font-weight: 700; font-size: 14.500px; }
.side { margin-left: 146px; padding-top: 20px; width: 260px; }
.tabs { width: 200px; height: 38px; border: 2px solid #2ccf5a; border-radius: 19px; margin-left: 30px; padding: 2px 3px; display: flex; }
.tb { width: 93px; height: 30px; border-radius: 15px; display: flex; align-items: center; justify-content: center; font-size: 15.500px; font-weight: 900; color: #28c254; padding-bottom: 2px; }
.tb.on { background: #2ccf5a; color: #fff; }
.phone { position: relative; width: 260px; height: 520px; margin-top: 8px; padding: 0 2px; }
.k { position: absolute; width: 3px; background: #7d6f88; }
.k1 { left: 0; top: 87px; height: 17px; }
.k2 { left: 0; top: 119px; height: 38px; }
.k3 { left: 0; top: 169px; height: 38px; }
.k4 { right: 0; top: 146px; height: 58px; }
.body { position: relative; width: 256px; height: 520px; border-radius: 44px; background: #000; border: 2px solid #5c5066; box-shadow: inset 0 0 0 1px #b8aec0; padding: 8px 11px; }
.screen { position: relative; width: 230px; height: 498px; background: #fff; border-radius: 33px; overflow: hidden; padding: 0 16px; }
.wave { position: absolute; left: 0; top: 0; }
.sb { position: relative; height: 40px; display: flex; justify-content: space-between; align-items: center; padding-left: 4px; font-size: 8.500px; font-weight: 900; color: #000; }
.isl { position: absolute; left: 71px; top: 9px; width: 81px; height: 23px; border-radius: 12px; background: #000; }
.isl i { position: absolute; right: 8px; top: 8px; width: 8px; height: 8px; border-radius: 50%; background: #101442; }
.pn { position: relative; text-align: center; color: #fff; font-size: 17.500px; line-height: 48px; height: 73px; }
.pc { position: relative; height: 141px; background: #fff; border-radius: 4px; box-shadow: 0 8px 16px rgba(0,0,0,.04); padding: 14px 8px 0; text-align: center; }
.p1 { font-size: 17px; font-weight: 700; color: #000; line-height: 30px; }
.p2 { font-size: 16.500px; color: #747b85; line-height: 33px; height: 37px; }
.p3 { height: 52px; background: #7ec09f; border-radius: 4px; font-size: 16px; line-height: 50px; color: #000; }
.ph2 { margin-top: 30px; height: 134px; background: #fff; border-radius: 4px; box-shadow: 0 4px 16px rgba(0,0,0,.05); padding: 10px 10px 0; }
.oh { height: 41px; border-bottom: 1px solid #ececec; display: flex; padding-bottom: 11px; align-items: center; font-size: 13px; color: #0b0b0b; font-weight: 500; }
.ob { width: 30px; height: 30px; border-radius: 4px; background: #fafafa; color: #747b85; display: flex; align-items: center; justify-content: center; margin-right: 8px; }
.cls { color: #fb0000; }
.mo { margin: 0 10px; height: 46px; padding-top: 13px; border-bottom: 1px solid #ececec; display: flex; justify-content: space-between; align-items: center; font-size: 9.500px; color: #8d9096; }
.m1 { color: #222; font-weight: 600; }
.os { font-size: 18px; line-height: 66px; height: 52px; color: #1d2433; }
.apm { height: 60px; border-radius: 4px; box-shadow: 0 0 12px rgba(0,0,0,.05); padding: 13px 0 0 11px; display: flex; font-size: 13.500px; line-height: 17px; color: #1d2433; }
.apm i { width: 42px; height: 42px; border: 1px solid #d8d8d8; border-radius: 50%; margin-right: 9px; }
.fab { position: absolute; left: 172px; top: 439px; width: 46px; height: 46px; border-radius: 6px; background: #527ac9; display: flex; flex-direction: column; align-items: center; justify-content: center; gap: 3.500px; }
.fab i { width: 6px; height: 6px; border-radius: 50%; background: #fff; }
.hi { position: absolute; left: 65px; top: 483px; width: 100px; height: 4px; border-radius: 2px; background: #000; }
.bar { position: absolute; left: 0; top: 1004px; width: 1440px; height: 76px; background: #fff; box-shadow: 0 -2px 8px rgba(0,0,0,.05); display: flex; justify-content: space-between; padding: 13px 136px 0 135px; }
.back, .save { width: 152px; height: 52px; border-radius: 3px; display: flex; align-items: center; justify-content: center; gap: 9px; font-size: 17px; font-weight: 900; border: 1px solid #28c254; background: #e8f6e9; color: #28c254; }
.save { background: #28c254; color: #fff; gap: 14px; }
</style>
